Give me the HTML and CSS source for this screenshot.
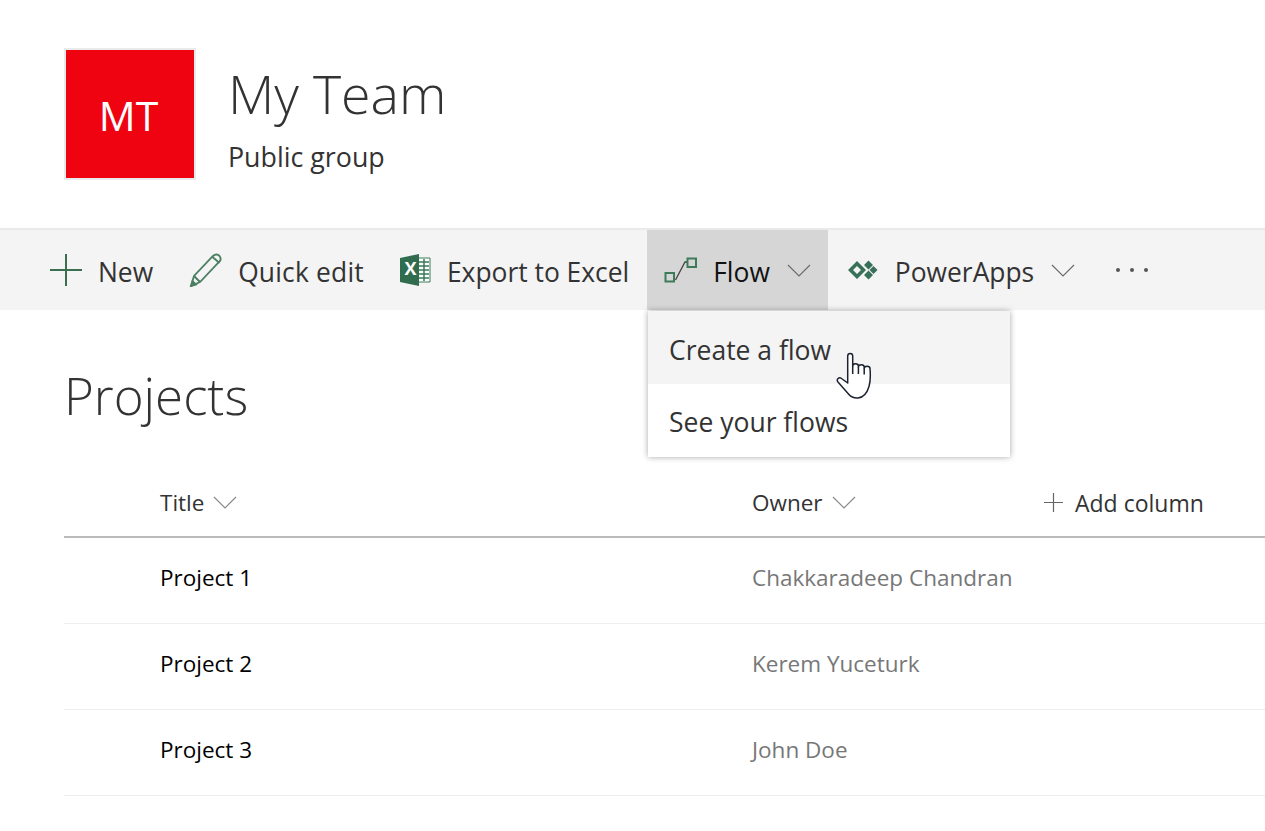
FILE: index.html
```html
<!DOCTYPE html>
<html lang="en">
<head>
	<meta charset="utf-8" />
	<title>My Team - Projects</title>
	<link rel="stylesheet" href="styles.css">
</head>
<body>
	<header class="site-head">
		<div class="logo">MT</div>
		<div class="site-info">
			<h1>My Team</h1>
			<p>Public group</p>
		</div>
	</header>

	<nav class="toolbar">
		<div class="tool tool-new">
			<svg width="34" height="34" viewBox="0 0 34 34"><path d="M17 1v32M1 17h32" stroke="#3a6f50" stroke-width="2" fill="none"/></svg>
			<span>New</span>
		</div>
		<div class="tool tool-edit">
			<svg width="34" height="34" viewBox="0 0 34 34" fill="none" stroke="#4b7f62" stroke-width="1.8"><path d="M2 33l3-10L24 3c2-2 5-2 6.500 0s1.500 4 0 5.500L11 29z"/><path d="M5 23l6 6M23.500 4l7 6"/><path d="M2 33l1.500-5 3.500 3.500z" fill="#4b7f62"/></svg>
			<span>Quick edit</span>
		</div>
		<div class="tool tool-excel">
			<svg width="32" height="32" viewBox="0 0 32 32"><path d="M19 4h12v24H19z" fill="#fff" stroke="#3a7a5a" stroke-width="1"/><path d="M20 8h10M20 12h10M20 16h10M20 20h10M20 24h10M25 5v22" stroke="#3a7a5a" stroke-width="1.500"/><path d="M1 4L20 0v32L1 28z" fill="#2f6d4e"/><text x="5.500" y="21" class="excel-x">X</text></svg>
			<span>Export to Excel</span>
		</div>
		<div class="tool tool-flow">
			<svg width="34" height="26" viewBox="0 0 34 26" fill="none"><path d="M1.500 16h8.500v8.500H1.500zM23.500 1.500H32V10h-8.500z" stroke="#3d7a58" stroke-width="2"/><path d="M11.500 23l9.500-18h2" stroke="#444" stroke-width="1.300"/></svg>
			<span>Flow</span>
			<svg class="chev" width="24" height="13" viewBox="0 0 24 13"><path d="M1 1l11 11L23 1" fill="none" stroke="#6b6b6b" stroke-width="1.200"/></svg>
		</div>
		<div class="tool tool-apps">
			<svg width="30" height="20" viewBox="0 0 30 20" fill="#38705a"><path d="M0 10l9-9 9 9-9 9zM5 10l4 4 4-4-4-4z" fill-rule="evenodd"/><path d="M16 5l4.500-4.500L25 5l-4.500 4.500zM16 15l4.500-4.500L25 15l-4.500 4.500zM21.500 10l4-4 4 4-4 4z"/></svg>
			<span>PowerApps</span>
			<svg class="chev" width="24" height="13" viewBox="0 0 24 13"><path d="M1 1l11 11L23 1" fill="none" stroke="#6b6b6b" stroke-width="1.200"/></svg>
		</div>
		<div class="tool tool-more">
			<i></i><i></i><i></i>
		</div>

		<div class="flow-menu">
			<div class="menu-item menu-item-hover">Create a flow</div>
			<div class="menu-item">See your flows</div>
		</div>
		<svg class="hand" width="37" height="49" viewBox="0 0 37 49" fill="#fff" stroke="#1c2230" stroke-width="1.500" stroke-linejoin="round"><path d="M11.700 32V5c0-3.500 5-3.500 5 0V15c0-3 5.700-3 5.700 0v1c0-3 5.800-3 5.800 0v1.500c0-3 5.800-3 5.800 0 .5 6 .5 13-1 18-1.500 5-5 11-11 11.500-4 .3-7-1-9.500-4L2 31c-2-2.500 1-5.500 3.500-3.500z"/><path d="M16.700 15v8M22.400 16v7M28.200 17.500v6" fill="none"/></svg>
	</nav>

	<main class="content">
		<h2>Projects</h2>
		<div class="row row-head">
			<div class="col-title">Title<svg class="chev-head" width="24" height="13" viewBox="0 0 24 13"><path d="M1 1l11 11L23 1" fill="none" stroke="#8a8a8a" stroke-width="1.200"/></svg></div>
			<div class="col-owner">Owner<svg class="chev-head" width="24" height="13" viewBox="0 0 24 13"><path d="M1 1l11 11L23 1" fill="none" stroke="#8a8a8a" stroke-width="1.200"/></svg></div>
			<div class="col-add"><svg width="19" height="19" viewBox="0 0 19 19"><path d="M9.500 0v19M0 9.500h19" stroke="#666" stroke-width="1.200"/></svg><span>Add column</span></div>
		</div>
		<div class="row">
			<div class="col-title">Project 1</div>
			<div class="col-owner">Chakkaradeep Chandran</div>
		</div>
		<div class="row">
			<div class="col-title">Project 2</div>
			<div class="col-owner">Kerem Yuceturk</div>
		</div>
		<div class="row">
			<div class="col-title">Project 3</div>
			<div class="col-owner">John Doe</div>
		</div>
	</main>
</body>
</html>
```
FILE: styles.css
```css
html, body {
	margin: 0;
	padding: 0;
	background: #fff;
	overflow: hidden;
}
body {
	font-family: "Open Sans", "Noto Sans", sans-serif;
	font-size: 22.5px;
	color: #333;
	height: 831px;
}
.site-head {
	display: flex;
	height: 228px;
	box-sizing: border-box;
	padding: 48px 0 0 64px;
}
.logo {
	width: 132px;
	height: 132px;
	box-sizing: border-box;
	border: 2px solid #eaeaea;
	background: #f00311;
	color: #fff;
	padding-right: 3px;
	font-size: 41px;
	line-height: 131px;
	text-align: center;
}
.site-info {
	margin-left: 32px;
}
.site-info h1 {
	margin: 7px 0 0;
	font-size: 53.7px;
	line-height: 78px;
	font-weight: 300;
}
.site-info p {
	margin: 4px 0 0;
	font-size: 26.8px;
	line-height: 40px;
}
.toolbar {
	position: relative;
	display: flex;
	height: 80px;
	padding-left: 49px;
	background: #f4f4f4;
	border-top: 2px solid #eaeaea;
	align-items: stretch;
}
.tool {
	display: flex;
	align-items: center;
	gap: 15px;
	font-size: 26.4px;
}
.tool span {
	position: relative;
	top: 2px;
}
.tool-new { margin-right: 36px; }
.tool-edit { margin-right: 35px; letter-spacing: .2px; }
.tool-excel { margin-right: 18px; gap: 16px; }
.tool-flow {
	background: #d6d6d6;
	padding: 0 17px;
	color: #111;
}
.tool-flow .chev { margin-left: 2px; }
.tool-apps { margin-left: 20px; margin-right: 41px; gap: 17px; }
.tool-more { gap: 10px; }
.tool-more i {
	width: 4px;
	height: 4px;
	border-radius: 2px;
	background: #555;
}
.excel-x {
	font-size: 18px;
	font-weight: 700;
	fill: #fff;
}
.flow-menu {
	position: absolute;
	top: 81px;
	left: 648px;
	width: 362px;
	background: #fff;
	box-shadow: 0 0 6px rgba(0, 0, 0, .35);
}
.menu-item {
	height: 73px;
	line-height: 76px;
	padding-left: 21px;
	font-size: 26.5px;
}
.menu-item-hover {
	background: #f4f4f4;
	line-height: 78px;
}
.hand {
	position: absolute;
	top: 121px;
	left: 836px;
}
.content {
	padding-left: 64px;
}
.content h2 {
	margin: 50px 0 39px;
	font-size: 51px;
	line-height: 70px;
	font-weight: 300;
}
.row {
	display: flex;
	align-items: center;
	box-sizing: border-box;
	height: 86px;
	padding: 0 0 7px 96px;
	border-bottom: 1px solid #eee;
	color: #000;
}
.row-head {
	height: 69px;
	padding-bottom: 0;
	border-bottom: 2px solid #bbb;
	color: #333;
}
.col-title { width: 592px; }
.col-owner { width: 291px; color: #777; }
.row-head .col-owner { color: #333; }
.col-add { display: flex; align-items: center; gap: 12px; margin-left: 1px; font-size: 23px; }
.chev-head { margin-left: 9px; margin-bottom: 2px; }
```
